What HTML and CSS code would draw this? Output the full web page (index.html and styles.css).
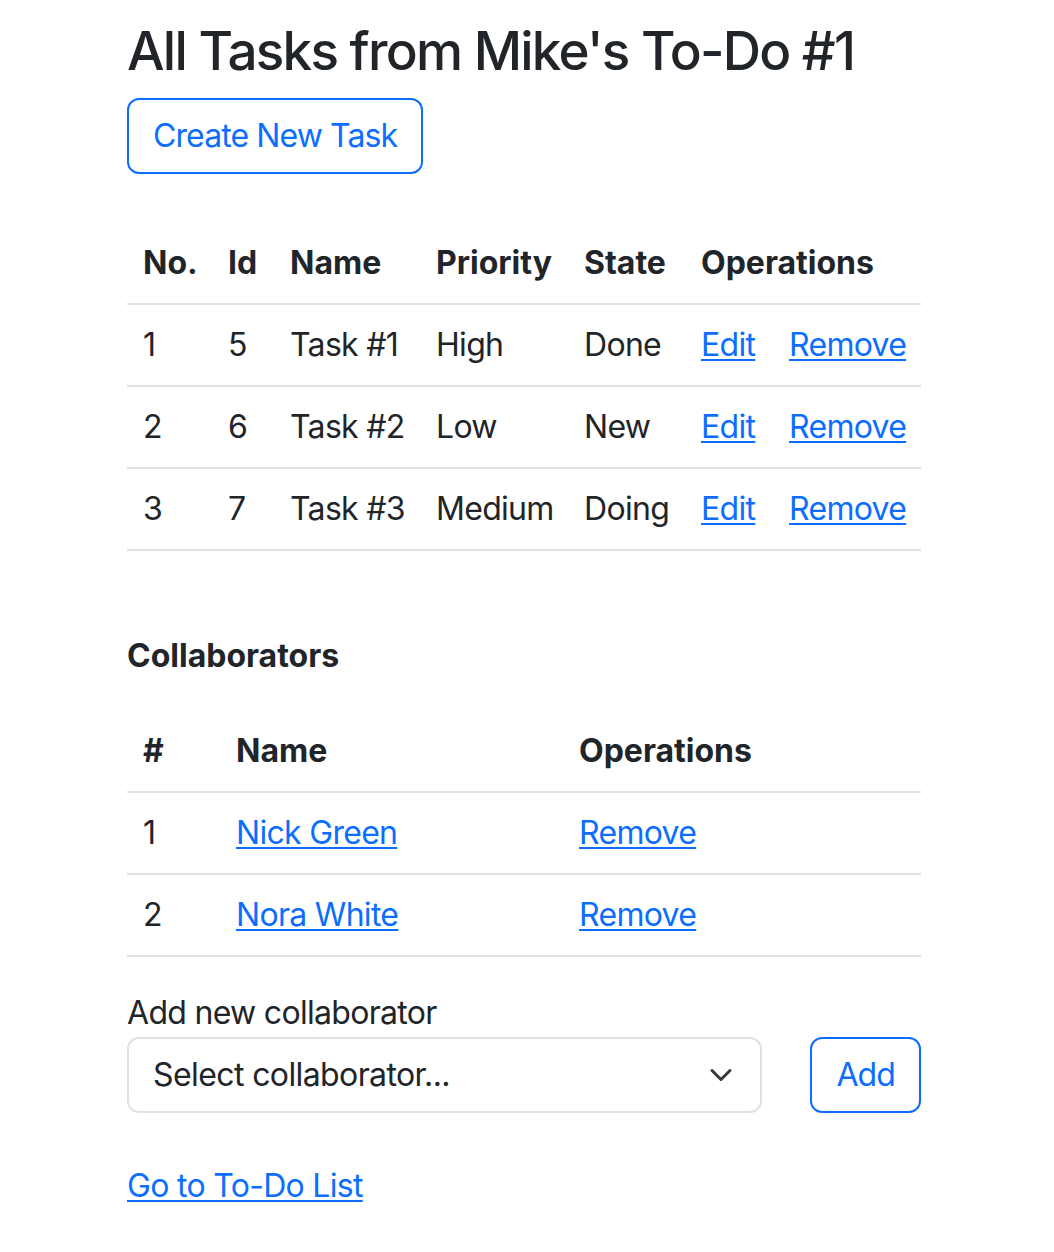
FILE: index.html
```html
<!DOCTYPE html>
<html lang="en">
<head>
<meta charset="utf-8">
<title>All Tasks from Mike's To-Do #1</title>
<link rel="stylesheet" href="styles.css">
</head>
<body>
<main class="page">
  <h1 class="title">All Tasks from Mike's To-Do #1</h1>
  <div class="actions">
    <a class="btn btn-outline" href="#">Create New Task</a>
  </div>

  <table class="table tasks">
    <colgroup>
      <col class="c-no"><col class="c-id"><col class="c-name"><col class="c-prio"><col class="c-state"><col class="c-edit"><col class="c-remove">
    </colgroup>
    <thead>
      <tr><th>No.</th><th>Id</th><th>Name</th><th>Priority</th><th>State</th><th colspan="2">Operations</th></tr>
    </thead>
    <tbody>
      <tr><td>1</td><td>5</td><td>Task #1</td><td>High</td><td>Done</td><td><a href="#">Edit</a></td><td><a href="#">Remove</a></td></tr>
      <tr><td>2</td><td>6</td><td>Task #2</td><td>Low</td><td>New</td><td><a href="#">Edit</a></td><td><a href="#">Remove</a></td></tr>
      <tr><td>3</td><td>7</td><td>Task #3</td><td>Medium</td><td>Doing</td><td><a href="#">Edit</a></td><td><a href="#">Remove</a></td></tr>
    </tbody>
  </table>

  <h2 class="section-title">Collaborators</h2>

  <table class="table collabs">
    <colgroup>
      <col class="k-num"><col class="k-name"><col class="k-ops">
    </colgroup>
    <thead>
      <tr><th>#</th><th>Name</th><th>Operations</th></tr>
    </thead>
    <tbody>
      <tr><td>1</td><td><a href="#">Nick Green</a></td><td><a href="#">Remove</a></td></tr>
      <tr><td>2</td><td><a href="#">Nora White</a></td><td><a href="#">Remove</a></td></tr>
    </tbody>
  </table>

  <form class="add-form">
    <label class="form-label" for="collab">Add new collaborator</label>
    <div class="form-row">
      <div class="select-wrap">
        <select id="collab" class="form-select">
          <option>Select collaborator...</option>
        </select>
        <svg class="chevron" width="24" height="24" viewBox="0 0 16 16" aria-hidden="true"><path d="M2 5l6 6 6-6" fill="none" stroke="#343a40" stroke-width="2" stroke-linecap="round" stroke-linejoin="round"/></svg>
      </div>
      <button type="button" class="btn btn-outline">Add</button>
    </div>
  </form>

  <a class="back-link" href="#">Go to To-Do List</a>
</main>
</body>
</html>
```
FILE: styles.css
```css
html, body {
  margin: 0;
  padding: 0;
  background: #fff;
}
body {
  font-family: Inter, "Noto Sans", "Liberation Sans", sans-serif;
  font-size: 32px;
  line-height: 48px;
  color: #212529;
  letter-spacing: -0.7px;
}
.page {
  width: 794px;
  margin-left: 127px;
  padding-top: 18px;
}
.title {
  margin: 0 0 13px;
  font-size: 53px;
  line-height: 67px;
  font-weight: 500;
  letter-spacing: -1.75px;
  white-space: nowrap;
}
.actions {
  margin-bottom: 49px;
}
.btn {
  display: inline-block;
  box-sizing: border-box;
  padding: 12px 24px;
  font: inherit;
  font-size: 32px;
  line-height: 48px;
  letter-spacing: -0.9px;
  border-radius: 12px;
  text-decoration: none;
  background: #fff;
  cursor: pointer;
}
.btn-outline {
  border: 2px solid #0d6efd;
  color: #0d6efd;
}
a {
  color: #0d6efd;
  text-decoration: underline;
  text-underline-offset: 3px;
  text-decoration-thickness: 2px;
}
.table {
  width: 794px;
  border-collapse: collapse;
  table-layout: fixed;
  margin-bottom: 32px;
}
.table th,
.table td {
  padding: 16px;
  text-align: left;
  vertical-align: top;
  border-bottom: 2px solid #dee2e6;
  white-space: nowrap;
}
.table th {
  font-weight: 700;
  letter-spacing: 0;
}
.collabs {
  margin-bottom: 32px;
}
.c-no { width: 85px; }
.c-id { width: 62px; }
.c-name { width: 146px; }
.c-prio { width: 148px; }
.c-state { width: 117px; }
.c-edit { width: 88px; }
.c-remove { width: 148px; }
.k-num { width: 93px; }
.k-name { width: 343px; }
.k-ops { width: 358px; }
.section-title {
  margin: 81px 0 31px;
  font-size: 32px;
  line-height: 48px;
  font-weight: 700;
  letter-spacing: 0;
}
.add-form {
  margin-bottom: 49px;
}
.form-label {
  display: block;
  margin-bottom: 0;
}
.form-row {
  display: flex;
  justify-content: space-between;
  align-items: stretch;
}
.select-wrap {
  position: relative;
  width: 635px;
}
.form-select {
  appearance: none;
  -webkit-appearance: none;
  display: block;
  box-sizing: border-box;
  width: 100%;
  height: 76px;
  padding: 12px 72px 12px 24px;
  font: inherit;
  font-size: 32px;
  line-height: 48px;
  letter-spacing: -0.6px;
  color: #212529;
  background: #fff;
  border: 2px solid #dee2e6;
  border-radius: 12px;
}
.chevron {
  position: absolute;
  right: 29px;
  top: 26px;
  pointer-events: none;
}
.back-link {
  display: inline-block;
}
```
